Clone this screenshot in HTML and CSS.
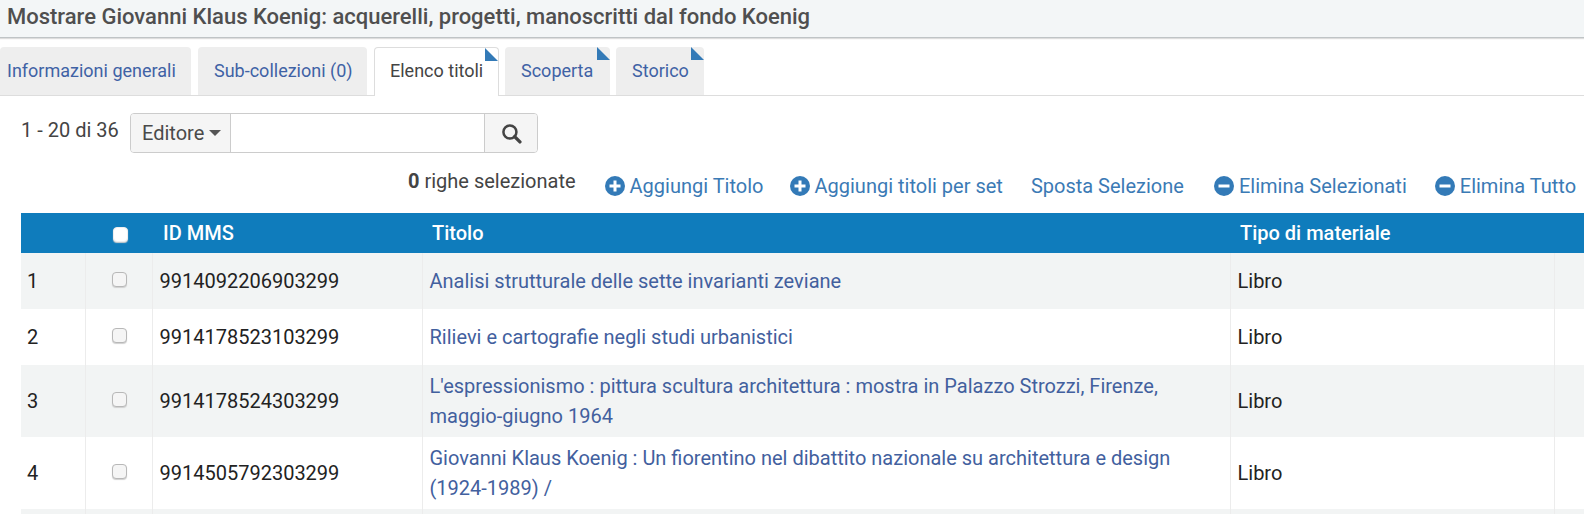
FILE: index.html
```html
<!DOCTYPE html>
<html lang="it">
<head>
<meta charset="utf-8">
<title>Elenco titoli</title>
<link rel="stylesheet" href="styles.css">
</head>
<body>
<header class="title-bar">Mostrare Giovanni Klaus Koenig: acquerelli, progetti, manoscritti dal fondo Koenig</header>
<nav class="tabs">
  <a class="tab tab-w1">Informazioni generali</a>
  <a class="tab tab-w2">Sub-collezioni (0)</a>
  <a class="tab tab-w3 active flagged">Elenco titoli</a>
  <a class="tab tab-w4 flagged">Scoperta</a>
  <a class="tab tab-w5 flagged">Storico</a>
</nav>
<section class="search-row">
  <span class="count">1 - 20 di 36</span>
  <div class="search">
    <div class="search-type">Editore<span class="caret"></span></div>
    <div class="search-input"></div>
    <div class="search-btn">
      <svg width="21" height="21" viewBox="0 0 20 20"><circle cx="8.5" cy="8.5" r="6.2" fill="none" stroke="#444" stroke-width="2.4"/><path d="M13 13l5 5" stroke="#444" stroke-width="3.2" stroke-linecap="round"/></svg>
    </div>
  </div>
</section>
<section class="actions">
  <span class="selected"><b>0</b> righe selezionate</span>
  <a class="action a1"><svg class="ic" viewBox="0 0 20 20"><circle cx="10" cy="10" r="10"/><path d="M10 4.5v11M4.5 10h11"/></svg>Aggiungi Titolo</a>
  <a class="action a2"><svg class="ic" viewBox="0 0 20 20"><circle cx="10" cy="10" r="10"/><path d="M10 4.5v11M4.5 10h11"/></svg>Aggiungi titoli per set</a>
  <a class="action a3">Sposta Selezione</a>
  <a class="action a4"><svg class="ic" viewBox="0 0 20 20"><circle cx="10" cy="10" r="10"/><path d="M4.5 10h11"/></svg>Elimina Selezionati</a>
  <a class="action a5"><svg class="ic" viewBox="0 0 20 20"><circle cx="10" cy="10" r="10"/><path d="M4.5 10h11"/></svg>Elimina Tutto</a>
</section>
<table class="grid">
  <colgroup><col class="c1"><col class="c2"><col class="c3"><col class="c4"><col class="c5"><col></colgroup>
  <thead>
    <tr><th></th><th class="chk"><span class="cb cb-head"></span></th><th class="th-id">ID MMS</th><th>Titolo</th><th>Tipo di materiale</th><th></th></tr>
  </thead>
  <tbody>
    <tr class="h56"><td>1</td><td class="chk"><span class="cb"></span></td><td>9914092206903299</td><td><a>Analisi strutturale delle sette invarianti zeviane</a></td><td>Libro</td><td></td></tr>
    <tr class="h56"><td>2</td><td class="chk"><span class="cb"></span></td><td>9914178523103299</td><td><a>Rilievi e cartografie negli studi urbanistici</a></td><td>Libro</td><td></td></tr>
    <tr class="h72"><td>3</td><td class="chk"><span class="cb"></span></td><td>9914178524303299</td><td><a>L'espressionismo : pittura scultura architettura : mostra in Palazzo Strozzi, Firenze, maggio-giugno 1964</a></td><td>Libro</td><td></td></tr>
    <tr class="h72"><td>4</td><td class="chk"><span class="cb"></span></td><td>9914505792303299</td><td><a>Giovanni Klaus Koenig : Un fiorentino nel dibattito nazionale su architettura e design (1924-1989) /</a></td><td>Libro</td><td></td></tr>
    <tr class="h56"><td></td><td></td><td></td><td></td><td></td><td></td></tr>
  </tbody>
</table>
</body>
</html>
```
FILE: styles.css
```css
html, body { margin: 0; height: 514px; overflow: hidden; background: #fff; }
body { font-family: Roboto, sans-serif; font-size: 20px; color: #333; }

.title-bar { height: 38px; box-sizing: border-box; padding: 3px 0 0 7px; background: #f3f6f7; border-bottom: 1px solid #bfc4c6; box-shadow: 0 1px 1px #ddd; font-size: 22px; font-weight: 500; line-height: 28px; color: #4f4f4f; white-space: nowrap; }

.tabs { display: flex; height: 48px; margin-top: 9px; border-bottom: 1px solid #ddd; }
.tab { position: relative; box-sizing: border-box; height: 48px; padding: 13px 0 0 16px; background: #eee; border-radius: 4px 4px 0 0; color: #3f62a5; font-size: 18px; line-height: 22px; white-space: nowrap; }
.tab-w1 { width: 191px; padding-left: 7px; }
.tab-w2 { width: 169px; margin-left: 7px; }
.tab-w3 { width: 125px; margin-left: 7px; }
.tab-w4 { width: 105px; margin-left: 6px; }
.tab-w5 { width: 88px; margin-left: 6px; }
.tab.active { background: #fff; border: 1px solid #ddd; border-bottom: 0; height: 49px; color: #444; padding: 12px 0 0 15px; }
.flagged::after { content: ""; position: absolute; top: 0; right: 0; border-style: solid; border-width: 0 13px 13px 0; border-color: transparent transparent #337ab7 transparent; }

.search-row { display: flex; align-items: flex-start; padding: 17px 0 0 21px; height: 40px; }
.count { margin-top: 5px; line-height: 24px; color: #444; width: 109px; white-space: nowrap; }
.search { display: flex; width: 408px; height: 40px; box-sizing: border-box; border: 1px solid #ccc; border-radius: 4px; }
.search-type { box-sizing: border-box; width: 100px; padding-left: 11px; background: #f5f5f5; border-right: 1px solid #ccc; border-radius: 3px 0 0 3px; color: #4a4a4a; display: flex; align-items: center; white-space: nowrap; }
.caret { margin-left: 5px; border-top: 6px solid #555; border-left: 6px solid transparent; border-right: 6px solid transparent; }
.search-input { flex: 1; background: #fff; }
.search-btn { box-sizing: border-box; width: 53px; background: #f5f5f5; border-left: 1px solid #ccc; border-radius: 0 3px 3px 0; display: flex; align-items: center; justify-content: center; }

.actions { height: 60px; display: flex; align-items: flex-start; padding-top: 16px; box-sizing: border-box; }
.selected { margin-left: 408px; line-height: 24px; color: #444; white-space: nowrap; }
.selected b { font-weight: 700; }
.action { display: flex; align-items: center; color: #3b7ab5; line-height: 24px; margin-top: 5px; white-space: nowrap; }
.ic { width: 20px; height: 20px; margin-right: 5px; flex: none; }
.ic circle { fill: #337ab7; }
.ic path { stroke: #fff; stroke-width: 3; fill: none; }
.a1 { margin-left: 29px; }
.a2 { margin-left: 26px; }
.a3 { margin-left: 28px; }
.a4 { margin-left: 30px; }
.a5 { margin-left: 28px; }

.grid { margin-left: 21px; width: 1563px; border-collapse: collapse; table-layout: fixed; }
.c1 { width: 64px; } .c2 { width: 67px; } .c3 { width: 270px; } .c4 { width: 808px; } .c5 { width: 324px; }
.grid th { height: 40px; padding: 0 10px; background: #0f7cbc; color: #fff; font-weight: 500; text-align: left; font-size: 20px; white-space: nowrap; }
.grid .th-id { padding-left: 11px; }
.grid td { padding: 0 7px; border-left: 1px solid #ececec; color: #222; line-height: 30px; }
.grid td:first-child { border-left: 0; padding-left: 6px; }
.grid a { color: #42609e; }
.grid tbody tr:nth-child(odd) td { background: #f2f4f4; }
.h56 { height: 56px; } .h72 { height: 72px; }
.grid .chk { text-align: center; padding: 0 0 0 2px; }
.cb { display: block; box-sizing: border-box; width: 15px; height: 15px; margin: -4px auto 0; border: 1px solid #b8b8b8; border-radius: 4px; background: #f5f5f5; box-shadow: 0 1px 1px #d0d0d0; }
.cb-head { margin-top: 2px; background: #fff; border-color: #eee; }
.grid th.chk { padding-left: 4px; }
```
